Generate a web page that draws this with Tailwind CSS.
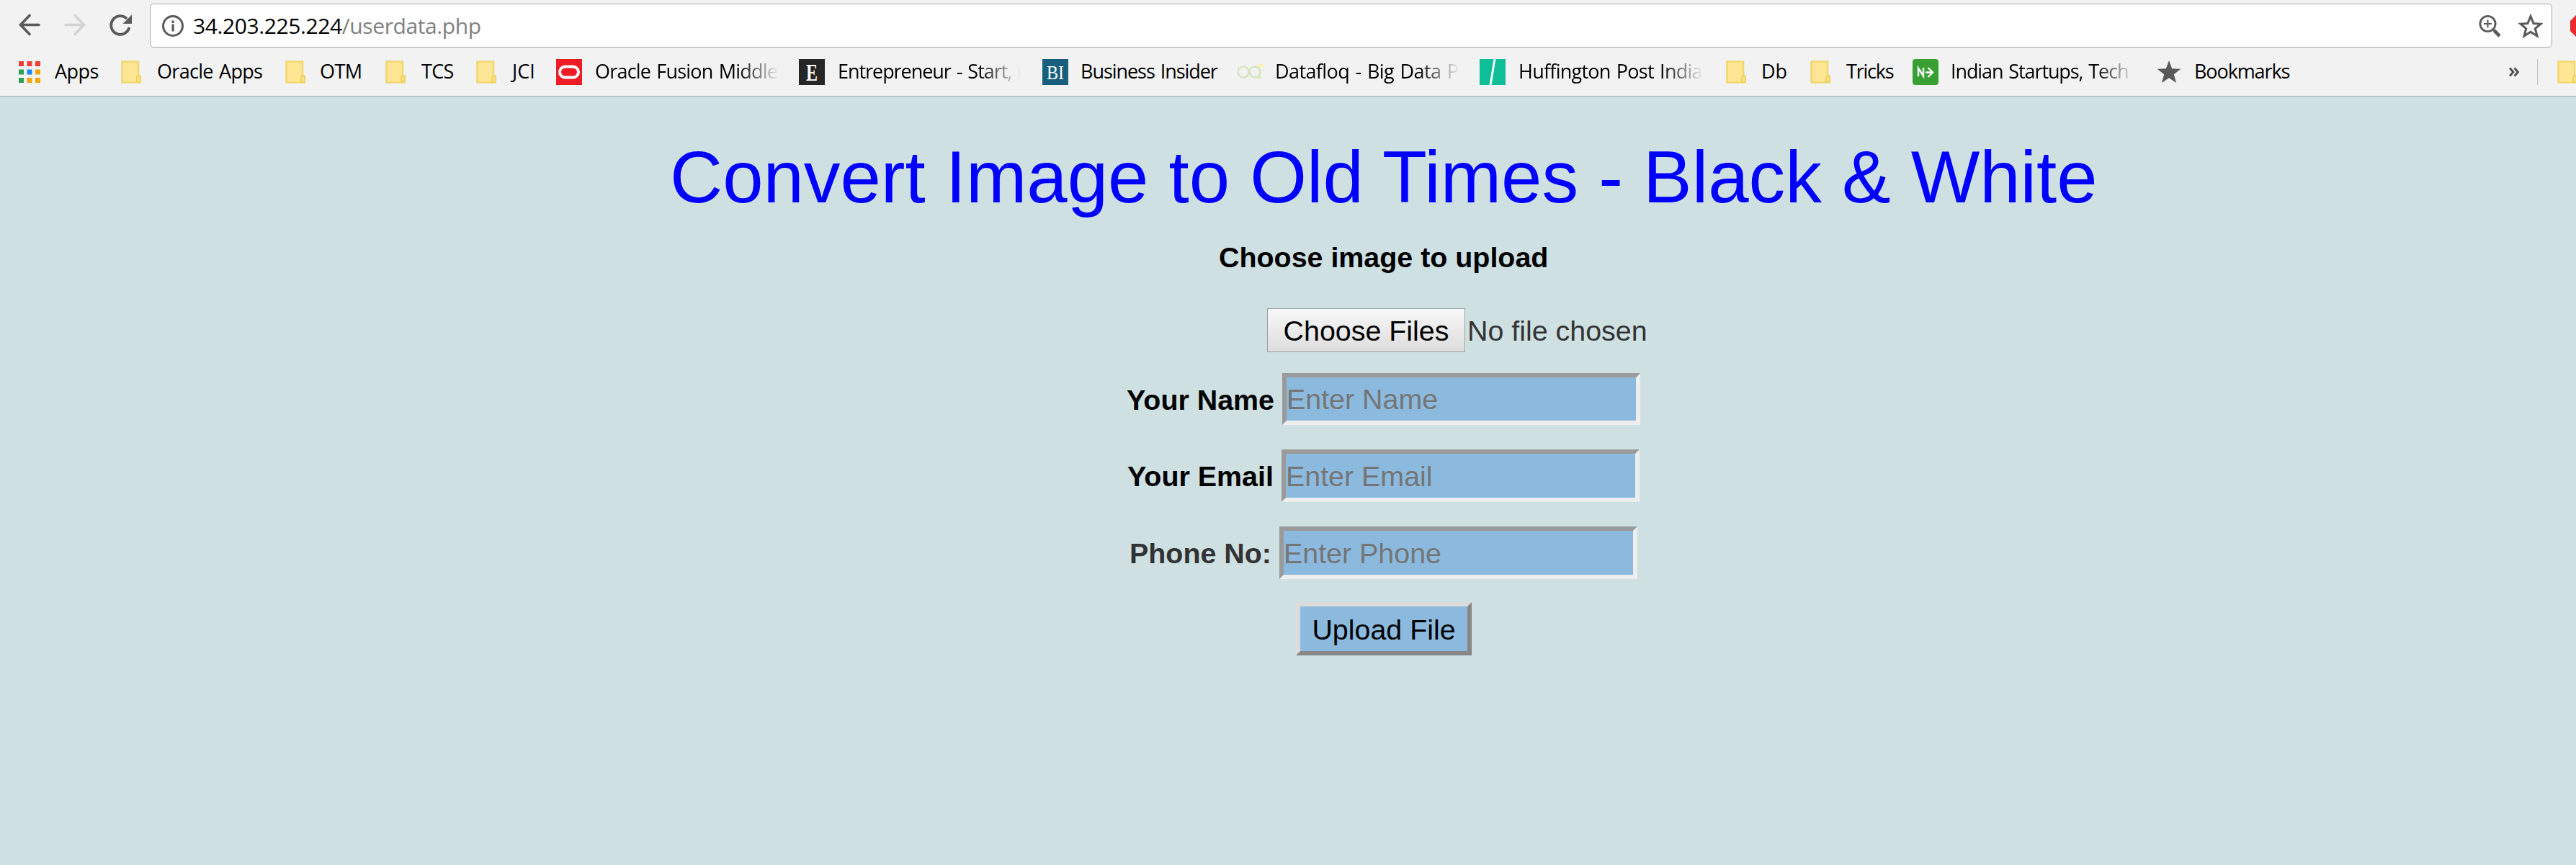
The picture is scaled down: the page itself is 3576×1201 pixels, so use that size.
<!DOCTYPE html>
<html lang="en">
<head>
<meta charset="utf-8">
<title>userdata</title>
<script src="https://cdn.jsdelivr.net/npm/@tailwindcss/browser@4"></script>
</head>
<body class="w-[3576px] h-[1201px] overflow-hidden bg-[#cee0e2] font-['Liberation_Sans',sans-serif]">
<svg class="hidden">
  <symbol id="folder" viewBox="0 0 28 32"><path d="M1.500 1.500h22.500v20h1.500q2 0 2 2v5q0 2-2 2h-24z" fill="#ffe694" stroke="#f0d772" stroke-width="2.600"/><path d="M22 30v-6q0-2.500 2.500-2.500t2.500 2.500v4q0 2-2 2z" fill="#ffe28a" stroke="#efd25c" stroke-width="1.800"/></symbol>
</svg>
<header class="h-[134px] border-b border-[#a0b0b4] bg-[#f2f2f2] font-['Open_Sans',sans-serif]">
  <!-- toolbar -->
  <div class="flex h-[66px] pt-[5px]">
    <svg class="w-[208px] h-[60px] shrink-0" viewBox="0 5 208 60" fill="none" stroke-linecap="round">
      <path d="M54 34.500H29M41 21.500L28.500 34.500L41 47.500" stroke="#5a5a5a" stroke-width="3.600"/>
      <path d="M91 34.500h25M104 21.500l12.500 13l-12.500 13" stroke="#d3d3d3" stroke-width="3.600"/>
      <path d="M179 39.500A12.800 12.800 0 1 1 175 25" stroke="#5a5a5a" stroke-width="3.800"/>
      <path d="M183 20.500v12.500h-12.500z" fill="#5a5a5a"/>
    </svg>
    <div class="flex items-center w-[3335px] shrink-0 h-[61px] rounded-[5px] border border-[#a6a6a6] bg-white">
      <svg class="ml-[16px] w-[30px] h-[30px] shrink-0" viewBox="0 0 30 30"><circle cx="15" cy="15" r="13.500" fill="none" stroke="#5a5a5a" stroke-width="3"/><path d="M13.500 7.500h3.200v3.400h-3.200zM13.500 12.600h3.200v9.900h-3.200z" fill="#5a5a5a"/></svg>
      <div class="ml-[13px] text-[30px] leading-[40px] tracking-[-0.4px] whitespace-nowrap"><span class="text-black">34.203.225.224</span><span class="text-[#808080]">/userdata.php</span></div>
      <svg class="ml-auto mr-[12px] w-[90px] h-[34px]" viewBox="0 0 90 34"><g fill="none" stroke="#5a5a5a"><circle cx="13.500" cy="14" r="10.600" stroke-width="2.800"/><path d="M8 14h11M13.500 8.500v11" stroke-width="2"/><path d="M21 22l3 3" stroke-width="3"/><path d="M22.500 23.500L30 31" stroke-width="4.600"/></g><path d="M73 3.500L77 13.500L87 14.200L79.300 20.700L82 31L73 25.300L64 31L66.700 20.700L59 14.200L69 13.500Z" fill="none" stroke="#5a5a5a" stroke-width="3"/></svg>
    </div>
    <svg class="ml-[25px] mt-[15px] w-[32px] h-[32px] shrink-0" viewBox="0 0 32 32"><path d="M0 9L9 0h14l9 9v14l-9 9H9l-9-9z" fill="#ea2a2c"/></svg>
  </div>
  <!-- bookmarks bar -->
  <div class="flex items-center h-[67px] pt-[1px] pl-[26px] text-[27px] leading-[38px] text-black whitespace-nowrap [word-spacing:2px]">
    <div class="flex items-center w-[142px] shrink-0">
      <svg class="w-[30px] h-[30px] mr-[20px]" viewBox="0 0 30 30"><path d="M0 0h7v7H0zM11.500 0h7v7h-7zM23 0h7v7h-7z" fill="#ee4037"/><path d="M0 11.500h7v7H0zM0 23h7v7H0z" fill="#2c9f58"/><path d="M11.500 11.500h7v7h-7z" fill="#1b86f9"/><path d="M23 11.500h7v7h-7zM11.500 23h7v7h-7zM23 23h7v7h-7z" fill="#f2a60b"/></svg>
      <span class="pb-[2px] tracking-[-0.5px]">Apps</span>
    </div>
    <div class="flex items-center w-[228px] shrink-0"><svg class="w-[28px] h-[32px] mr-[22px]"><use href="#folder"/></svg><span class="pb-[2px] tracking-[-0.7px]">Oracle Apps</span></div>
    <div class="flex items-center w-[139px] shrink-0"><svg class="w-[28px] h-[32px] mr-[20px]"><use href="#folder"/></svg><span class="pb-[2px] tracking-[-0.5px]">OTM</span></div>
    <div class="flex items-center w-[126px] shrink-0"><svg class="w-[28px] h-[32px] mr-[22px]"><use href="#folder"/></svg><span class="pb-[2px] tracking-[-0.7px]">TCS</span></div>
    <div class="flex items-center w-[111px] shrink-0"><svg class="w-[28px] h-[32px] mr-[22px]"><use href="#folder"/></svg><span class="pb-[2px]">JCI</span></div>
    <div class="flex items-center w-[337px] shrink-0">
      <svg class="w-[36px] h-[36px] mr-[18px] shrink-0" viewBox="0 0 36 36"><path d="M0 0h36v36H0z" fill="#ee1c25"/><rect x="5" y="10.500" width="26" height="15" rx="7.500" fill="none" stroke="#fff" stroke-width="4"/></svg>
      <span class="pb-[2px] w-[255px] overflow-hidden tracking-[-0.8px] bg-linear-to-r from-black from-78% to-black/0 bg-clip-text text-transparent">Oracle Fusion Middlew</span>
    </div>
    <div class="flex items-center w-[338px] shrink-0">
      <svg class="w-[36px] h-[36px] mr-[18px] shrink-0" viewBox="0 0 36 36"><path d="M0 0h36v36H0z" fill="#262626"/><text x="18" y="29.500" text-anchor="middle" font-family="Liberation Serif" font-weight="bold" font-size="34" textLength="16" lengthAdjust="spacingAndGlyphs" fill="#fff">E</text></svg>
      <span class="pb-[2px] w-[254px] overflow-hidden tracking-[-1.05px] bg-linear-to-r from-black from-78% to-black/0 bg-clip-text text-transparent">Entrepreneur - Start, r</span>
    </div>
    <div class="flex items-center w-[270px] shrink-0">
      <svg class="w-[36px] h-[36px] mr-[17px] shrink-0" viewBox="0 0 36 36"><path d="M0 0h36v36H0z" fill="#185f7d"/><text x="18" y="27.500" text-anchor="middle" font-family="Liberation Serif" font-size="28" textLength="24" lengthAdjust="spacingAndGlyphs" fill="#fff">BI</text></svg>
      <span class="pb-[2px] tracking-[-1.05px]">Business Insider</span>
    </div>
    <div class="flex items-center w-[337px] shrink-0">
      <svg class="w-[36px] h-[36px] mr-[17px] shrink-0" viewBox="0 0 36 36" fill="none" stroke="#d3e5bd" stroke-width="2.400"><circle cx="9" cy="18" r="7.500"/><circle cx="25" cy="18" r="7.500"/><path d="M25 25.500h9"/><circle cx="33" cy="9" r="3" fill="#f8f5a8" stroke="none"/></svg>
      <span class="pb-[2px] w-[256px] overflow-hidden tracking-[-0.6px] bg-linear-to-r from-black from-78% to-black/0 bg-clip-text text-transparent">Datafloq - Big Data Pl</span>
    </div>
    <div class="flex items-center w-[342px] shrink-0">
      <svg class="w-[36px] h-[36px] mr-[18px] shrink-0" viewBox="0 0 36 36"><path d="M0 0h36v36H0z" fill="#0dbe98"/><path d="M19.500 0h3l-6 36h-3z" fill="#fff"/></svg>
      <span class="pb-[2px] w-[256px] overflow-hidden tracking-[-0.75px] bg-linear-to-r from-black from-78% to-black/0 bg-clip-text text-transparent">Huffington Post India</span>
    </div>
    <div class="flex items-center w-[117px] shrink-0"><svg class="w-[28px] h-[32px] mr-[21px]"><use href="#folder"/></svg><span class="pb-[2px]">Db</span></div>
    <div class="flex items-center w-[142px] shrink-0"><svg class="w-[28px] h-[32px] mr-[22px]"><use href="#folder"/></svg><span class="pb-[2px] tracking-[-1.2px]">Tricks</span></div>
    <div class="flex items-center w-[339px] shrink-0">
      <svg class="w-[36px] h-[36px] mr-[17px] shrink-0" viewBox="0 0 36 36"><rect width="36" height="36" rx="4" fill="#38a032"/><path d="M8 24V12.500l7 11V12M18 18.500h9.500M21.500 12l6.500 6.500l-6.500 6.500" fill="none" stroke="#fff" stroke-width="2.400"/></svg>
      <span class="pb-[2px] w-[256px] overflow-hidden tracking-[-1.1px] bg-linear-to-r from-black from-78% to-black/0 bg-clip-text text-transparent">Indian Startups, Tech</span>
    </div>
    <div class="flex items-center w-[489px] shrink-0">
      <svg class="w-[34px] h-[34px] mr-[18px] shrink-0" viewBox="0 0 34 34"><path d="M17 1l4.200 11.200l12 .6l-9.400 7.400l3.300 11.800L17 25.300L6.900 32l3.300-11.800L.8 12.800l12-.6z" fill="#5a5a5a"/></svg>
      <span class="pb-[2px] tracking-[-1.1px]">Bookmarks</span>
    </div>
    <svg class="w-[14px] h-[14px] shrink-0" viewBox="0 0 14 14"><path d="M1 1.500l5 5.500l-5 5.500M7.500 1.500l5 5.500l-5 5.500" fill="none" stroke="#4c4c4c" stroke-width="2.800"/></svg>
    <div class="ml-[25px] w-px h-[36px] shrink-0 bg-[#c0c0c0]"></div>
    <svg class="ml-[27px] w-[28px] h-[32px] shrink-0"><use href="#folder"/></svg>
  </div>
</header>
<main class="pt-[56px] text-[39.4px] leading-[46px] text-black whitespace-nowrap">
  <h1 class="pl-[930px] text-[101.3px] leading-[112px] text-[#0000ff]">Convert Image to Old Times - Black &amp; White</h1>
  <p class="mt-[32px] pl-[1692px] font-bold">Choose image to upload</p>
  <div class="mt-[48px] pl-[1759px] flex items-center h-[61px]">
    <button class="flex items-center justify-center w-[275px] h-[61px] border border-[#9b9fa0] bg-linear-to-b from-[#f8f8f8] to-[#dddddd]">Choose Files</button>
    <span class="ml-[3px] text-[#333333]">No file chosen</span>
  </div>
  <div class="mt-[29px] pl-[1564px] flex items-center h-[72px]">
    <label class="w-[216px] pt-[1px] font-bold">Your Name</label>
    <input class="w-[497px] h-[72px] pt-[1px] border-6 border-t-[#9a9a9a] border-l-[#9a9a9a] border-r-[#eeeeee] border-b-[#eeeeee] bg-[#8cbadf] placeholder:text-[#757575]" placeholder="Enter Name">
  </div>
  <div class="mt-[34px] pl-[1565px] flex items-center h-[73px]">
    <label class="w-[214px] pt-[1px] font-bold">Your Email</label>
    <input class="w-[497px] h-[73px] pt-[1px] border-6 border-t-[#9a9a9a] border-l-[#9a9a9a] border-r-[#eeeeee] border-b-[#eeeeee] bg-[#8cbadf] placeholder:text-[#757575]" placeholder="Enter Email">
  </div>
  <div class="mt-[34px] pl-[1568px] flex items-center h-[73px]">
    <label class="w-[208px] pt-[1px] font-bold text-[#333333]">Phone No:</label>
    <input class="w-[497px] h-[73px] pt-[1px] border-6 border-t-[#9a9a9a] border-l-[#9a9a9a] border-r-[#eeeeee] border-b-[#eeeeee] bg-[#8cbadf] placeholder:text-[#757575]" placeholder="Enter Phone">
  </div>
  <div class="mt-[32px] pl-[1799px] flex">
    <button class="flex items-center justify-center w-[244px] h-[74px] pt-[1px] border-6 border-t-[#dcdcdc] border-l-[#dcdcdc] border-r-[#878787] border-b-[#878787] bg-[#8cbadf]">Upload File</button>
  </div>
</main>
</body>
</html>
